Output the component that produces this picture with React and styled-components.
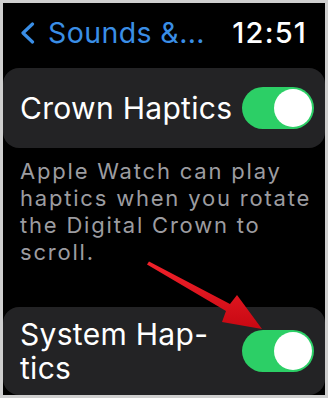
import styled, { createGlobalStyle } from "styled-components";

const Global = createGlobalStyle`
  html, body { margin: 0; padding: 0; background: #cfcfcf; }
  * { box-sizing: border-box; }
`;

const Frame = styled.div`
  width: 328px;
  height: 398px;
  padding: 3px;
  background: #cfcfcf;
`;

const Screen = styled.div`
  position: relative;
  height: 100%;
  background: #000;
  overflow: hidden;
  display: flex;
  flex-direction: column;
  font-family: Inter, "Liberation Sans", sans-serif;
`;

const Header = styled.div`
  display: flex;
  align-items: center;
  justify-content: space-between;
  height: 65px;
  padding: 0 18px 5px 17px;
`;

const Back = styled.div`
  display: flex;
  align-items: center;
  gap: 13px;
  color: #3a8ee6;
  font-size: 28.5px;
  letter-spacing: 0.4px;
`;

const Time = styled.div`
  color: #fff;
  font-size: 29px;
  font-weight: 500;
  letter-spacing: 1.2px;
`;

const Card = styled.div`
  display: flex;
  align-items: center;
  justify-content: space-between;
  height: ${(p) => p.h}px;
  padding: 0 11px 0 17px;
  background: #232325;
  border-radius: 16px;
  flex-shrink: 0;
`;

const Label = styled.div`
  color: #fff;
  font-size: 30px;
  line-height: 34px;
  letter-spacing: 0.3px;
`;

const Toggle = styled.div`
  width: 72px;
  height: 42px;
  border-radius: 21px;
  padding: 2px;
  background: #2ccf66;
  display: flex;
  justify-content: ${(p) => (p.on ? "flex-end" : "flex-start")};
  flex-shrink: 0;
`;

const Knob = styled.div`
  width: 38px;
  height: 38px;
  border-radius: 50%;
  background: #fff;
`;

const Note = styled.p`
  margin: 10px 0 0 0;
  padding: 0 12px 0 17px;
  height: 150px;
  color: #9c9ca0;
  font-size: 22px;
  line-height: 27px;
  letter-spacing: 1.8px;
`;

const Overlay = styled.svg`
  position: absolute;
  left: 0;
  top: 0;
  pointer-events: none;
`;

const Chevron = () => (
  <svg width="15" height="22" viewBox="0 0 15 22">
    <path d="M12.5 2 L3 11 L12.5 20" fill="none" stroke="#3a8ee6" strokeWidth="3.2" strokeLinecap="round" strokeLinejoin="round" />
  </svg>
);

const Arrow = () => (
  <Overlay width="322" height="392" viewBox="3 3 322 392">
    <defs>
      <linearGradient id="ar" x1="0" y1="0" x2="0" y2="1">
        <stop offset="0" stopColor="#f2222b" />
        <stop offset="1" stopColor="#c70812" />
      </linearGradient>
    </defs>
    <polygon
      points="147,264.5 149,261.5 230,304 237,295 262,329 222,322 226,311"
      fill="url(#ar)"
    />
  </Overlay>
);

export default function App() {
  return (
    <Frame>
      <Global />
      <Screen>
        <Header>
          <Back>
            <Chevron />
            <span>Sounds &amp;...</span>
          </Back>
          <Time>12:51</Time>
        </Header>
        <Card h={80}>
          <Label>Crown Haptics</Label>
          <Toggle on>
            <Knob />
          </Toggle>
        </Card>
        <Note>
          Apple Watch can play haptics when you rotate the Digital Crown to scroll.
        </Note>
        <Card h={88}>
          <Label>
            System Hap-
            <br />
            tics
          </Label>
          <Toggle on>
            <Knob />
          </Toggle>
        </Card>
        <Arrow />
      </Screen>
    </Frame>
  );
}
